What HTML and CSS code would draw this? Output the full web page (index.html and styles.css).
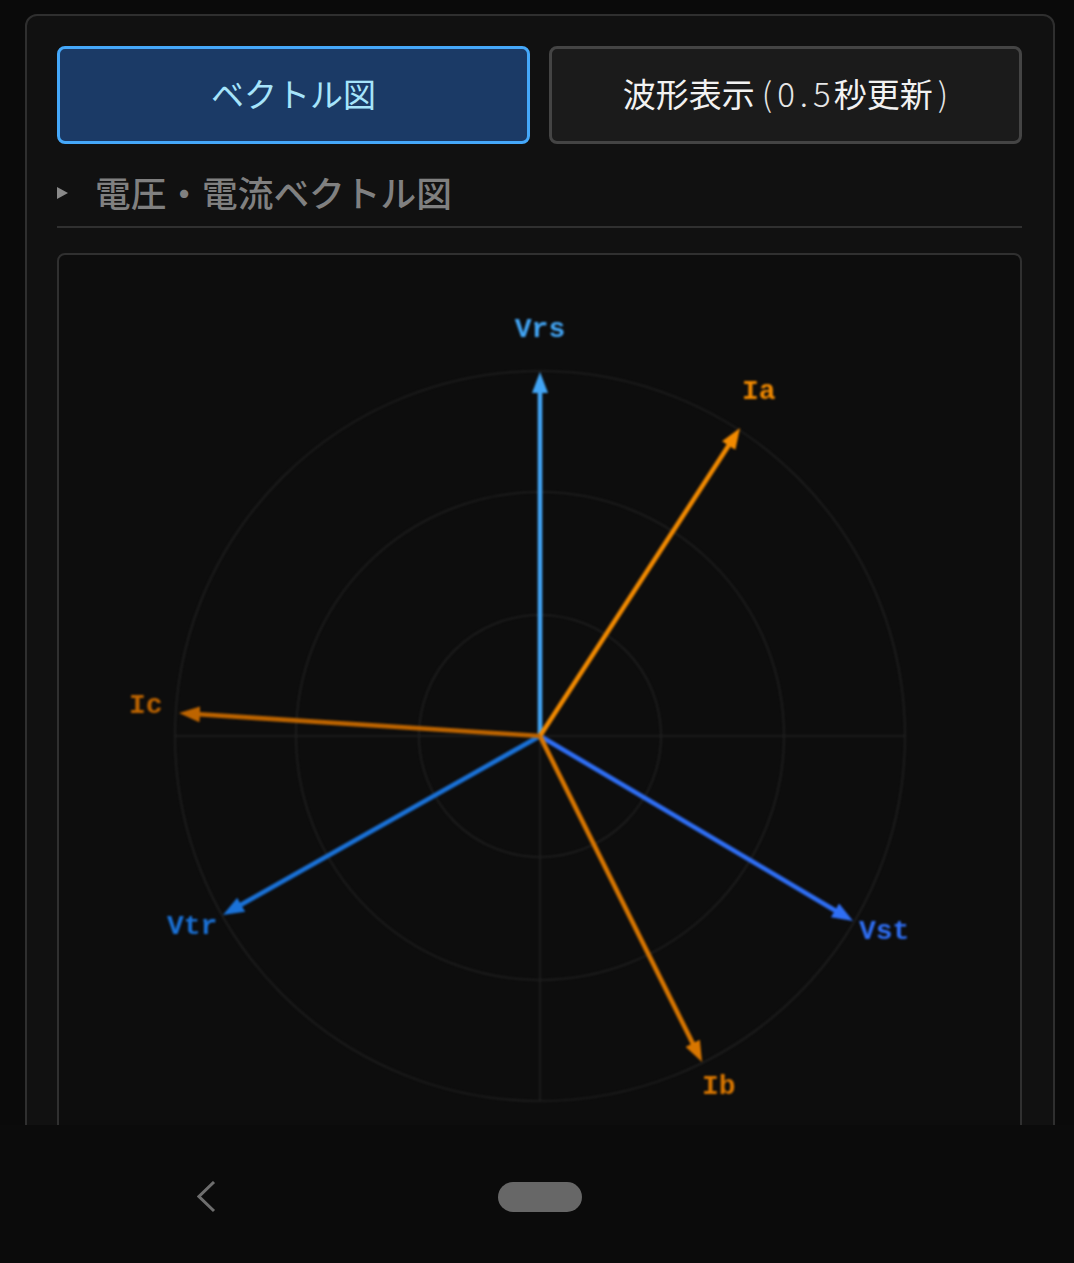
FILE: index.html
```html
<!DOCTYPE html>
<html lang="ja">
<head>
<meta charset="utf-8">
<title>ベクトル図</title>
<link rel="stylesheet" href="styles.css">
</head>
<body>
<div class="screen">
  <div class="panel">
    <div class="tabs">
      <button class="tab active">ベクトル図</button>
      <button class="tab">波形表示<span class="num">(0.5</span>秒更新<span class="num close">)</span></button>
    </div>
    <div class="section-head">
      <span class="tri"></span>
      <span class="title">電圧・電流ベクトル図</span>
    </div>
    <div class="chart">
      <svg class="plot" width="961" height="900" viewBox="59 255 961 900" xmlns="http://www.w3.org/2000/svg">
        <defs>
          <marker id="m-vrs" markerUnits="userSpaceOnUse" markerWidth="21" markerHeight="16" refX="9" refY="8" orient="auto"><path d="M0,0 L21,8 L0,16 z" fill="#42a5f5"/></marker>
          <marker id="m-vst" markerUnits="userSpaceOnUse" markerWidth="21" markerHeight="16" refX="9" refY="8" orient="auto"><path d="M0,0 L21,8 L0,16 z" fill="#2f6ff5"/></marker>
          <marker id="m-vtr" markerUnits="userSpaceOnUse" markerWidth="21" markerHeight="16" refX="9" refY="8" orient="auto"><path d="M0,0 L21,8 L0,16 z" fill="#1a72d8"/></marker>
          <marker id="m-ia" markerUnits="userSpaceOnUse" markerWidth="21" markerHeight="16" refX="9" refY="8" orient="auto"><path d="M0,0 L21,8 L0,16 z" fill="#f28a00"/></marker>
          <marker id="m-ib" markerUnits="userSpaceOnUse" markerWidth="21" markerHeight="16" refX="9" refY="8" orient="auto"><path d="M0,0 L21,8 L0,16 z" fill="#d87600"/></marker>
          <marker id="m-ic" markerUnits="userSpaceOnUse" markerWidth="21" markerHeight="16" refX="9" refY="8" orient="auto"><path d="M0,0 L21,8 L0,16 z" fill="#bd6400"/></marker>
        </defs>
        <g class="grid" fill="none" stroke="#202020" stroke-width="1.6">
          <circle cx="540" cy="736" r="365"/>
          <circle cx="540" cy="736" r="244"/>
          <circle cx="540" cy="736" r="121"/>
          <line x1="175" y1="736" x2="905" y2="736"/>
          <line x1="540" y1="371" x2="540" y2="1101"/>
        </g>
        <g class="vec" stroke-width="4.6" fill="none">
          <line x1="540" y1="736" x2="540" y2="384" stroke="#42a5f5" marker-end="url(#m-vrs)"/>
          <line x1="540" y1="736" x2="842.7" y2="914.9" stroke="#2f6ff5" marker-end="url(#m-vst)"/>
          <line x1="540" y1="736" x2="233.4" y2="909.1" stroke="#1a72d8" marker-end="url(#m-vtr)"/>
          <line x1="540" y1="736" x2="733.5" y2="438.1" stroke="#f28a00" marker-end="url(#m-ia)"/>
          <line x1="540" y1="736" x2="696.7" y2="1051.3" stroke="#d87600" marker-end="url(#m-ib)"/>
          <line x1="540" y1="736" x2="191" y2="713.8" stroke="#bd6400" marker-end="url(#m-ic)"/>
        </g>
        <g class="labels">
          <text x="540" y="337" text-anchor="middle" fill="#42a5f5">Vrs</text>
          <text x="859" y="939" fill="#2f6ff5">Vst</text>
          <text x="167" y="934" fill="#1a72d8">Vtr</text>
          <text x="742" y="399" fill="#f28a00">Ia</text>
          <text x="702" y="1094" fill="#d87600">Ib</text>
          <text x="129" y="713" fill="#bd6400">Ic</text>
        </g>
      </svg>
    </div>
  </div>
</div>
<div class="navbar">
  <svg class="back" width="20" height="32" viewBox="0 0 20 32" xmlns="http://www.w3.org/2000/svg">
    <polyline points="17,1 2,15.5 17,30" fill="none" stroke="#6e6e6e" stroke-width="3"/>
  </svg>
  <span class="home"></span>
</div>
</body>
</html>
```
FILE: styles.css
```css
* {
  box-sizing: border-box;
}

html, body {
  margin: 0;
  padding: 0;
  background: #0a0a0a;
}

body {
  width: 1074px;
  height: 1263px;
  overflow: hidden;
  font-family: "Noto Sans CJK JP", "Noto Sans", sans-serif;
}

.screen {
  height: 1125px;
  overflow: hidden;
  padding: 14px 19px 0 25px;
}

.panel {
  background: #111111;
  border: 2px solid #2f2f2f;
  border-radius: 12px;
  padding: 30px 31px 0 30px;
  min-height: 1300px;
}

.tabs {
  display: flex;
  gap: 19px;
}

.tab {
  flex: 1 1 0;
  height: 98px;
  border-radius: 8px;
  border: 3px solid #444444;
  background: #1b1b1b;
  color: #f2f2f2;
  font-family: "Noto Sans CJK JP", "Noto Sans", sans-serif;
  font-size: 33px;
  font-weight: 400;
  display: flex;
  align-items: center;
  justify-content: center;
  padding: 0 0 5px 0;
}

.tab.active {
  background: #1b3a66;
  border-color: #45a8fa;
  color: #a6e4fb;
}

.tab .num {
  font-weight: 300;
  letter-spacing: 5px;
  padding-left: 7px;
  margin-right: -2px;
  color: #e6e6e6;
}

.tab .num.close {
  padding-left: 5px;
  margin-right: 0;
  letter-spacing: 0;
}

.section-head {
  display: flex;
  align-items: center;
  margin-top: 27px;
  padding-bottom: 13px;
  border-bottom: 2px solid #303030;
}

.tri {
  width: 0;
  height: 0;
  border-top: 6px solid transparent;
  border-bottom: 6px solid transparent;
  border-left: 11px solid #8a8a8a;
  margin-right: 27px;
  margin-top: 1px;
}

.title {
  font-size: 35.7px;
  line-height: 42px;
  font-weight: 500;
  color: #808080;
}

.chart {
  margin-top: 25px;
  border: 2px solid #303030;
  border-radius: 8px;
  background: #0d0d0d;
  height: 1000px;
  overflow: hidden;
}

.plot {
  display: block;
  filter: blur(0.8px);
}

.labels text {
  font-family: "Liberation Mono", "DejaVu Sans Mono", monospace;
  font-weight: 700;
  font-size: 28px;
}

.navbar {
  height: 138px;
  background: #0b0b0b;
  display: flex;
  align-items: center;
  padding-top: 6px;
}

.back {
  display: block;
  margin-left: 197px;
}

.home {
  display: block;
  width: 84px;
  height: 30px;
  border-radius: 15px;
  background: #676767;
  margin-left: 281px;
}
```
